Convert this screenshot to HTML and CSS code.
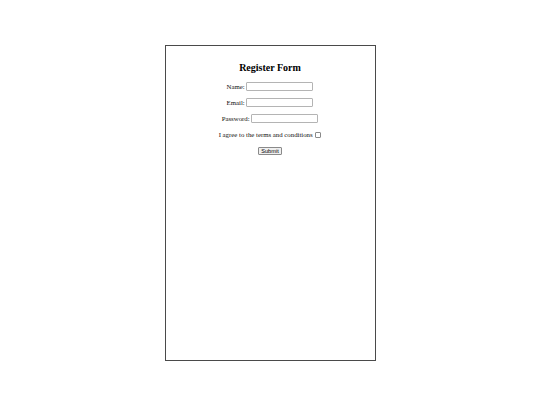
FILE: index.html
```html
<!DOCTYPE html>
<html>
<head>
<meta charset="utf-8">
<title>Register Form</title>
<link rel="stylesheet" href="styles.css">
</head>
<body>
<div class="card">
  <h2 class="title">Register Form</h2>
  <form class="form">
    <div class="row"><label for="name">Name:</label> <input class="field" type="text" id="name"></div>
    <div class="row"><label for="email">Email:</label> <input class="field" type="email" id="email"></div>
    <div class="row"><label for="pw">Password:</label> <input class="field" type="password" id="pw"></div>
    <div class="row"><label for="agree">I agree to the terms and conditions</label> <input class="check" type="checkbox" id="agree"></div>
    <div class="row row-btn"><button class="btn" type="button">Submit</button></div>
  </form>
</div>
</body>
</html>
```
FILE: styles.css
```css
html, body {
  margin: 0;
  padding: 0;
  background: #fff;
}
body {
  height: 405px;
  display: flex;
  align-items: center;
  justify-content: center;
  font-family: "Liberation Serif", "Times New Roman", serif;
  color: #111;
}
.card {
  box-sizing: border-box;
  width: 211px;
  height: 316px;
  border: 1px solid #4a4a4a;
  padding-top: 16px;
  display: flex;
  flex-direction: column;
  align-items: center;
}
.title {
  margin: 0;
  font-size: 10px;
  font-weight: bold;
  line-height: 11px;
  color: #000;
}
.form {
  margin-top: 9px;
  display: flex;
  flex-direction: column;
  align-items: center;
  gap: 7px;
}
.row {
  font-size: 6.8px;
  line-height: 9px;
  height: 9px;
  white-space: nowrap;
  text-align: center;
}
.field {
  box-sizing: border-box;
  width: 67px;
  height: 9px;
  margin: 0;
  padding: 0 1px;
  border: 1px solid #b4b4b4;
  border-radius: 1px;
  font-size: 5.8px;
  vertical-align: middle;
  background: #fff;
}
.check {
  -webkit-appearance: none;
  appearance: none;
  box-sizing: border-box;
  width: 6px;
  height: 6px;
  margin: 0 0 0 1px;
  border: 1px solid #8a8a8a;
  border-radius: 1px;
  vertical-align: middle;
  background: #fff;
}
.row-btn {
  margin-top: 1px;
}
.btn {
  box-sizing: border-box;
  height: 8px;
  margin: 0;
  padding: 0 1.8px;
  border: 1px solid #8a8a8a;
  border-radius: 1px;
  background: #efefef;
  font-family: "Liberation Sans", Arial, sans-serif;
  font-size: 5.6px;
  line-height: 6px;
  color: #000;
  vertical-align: top;
}
```
